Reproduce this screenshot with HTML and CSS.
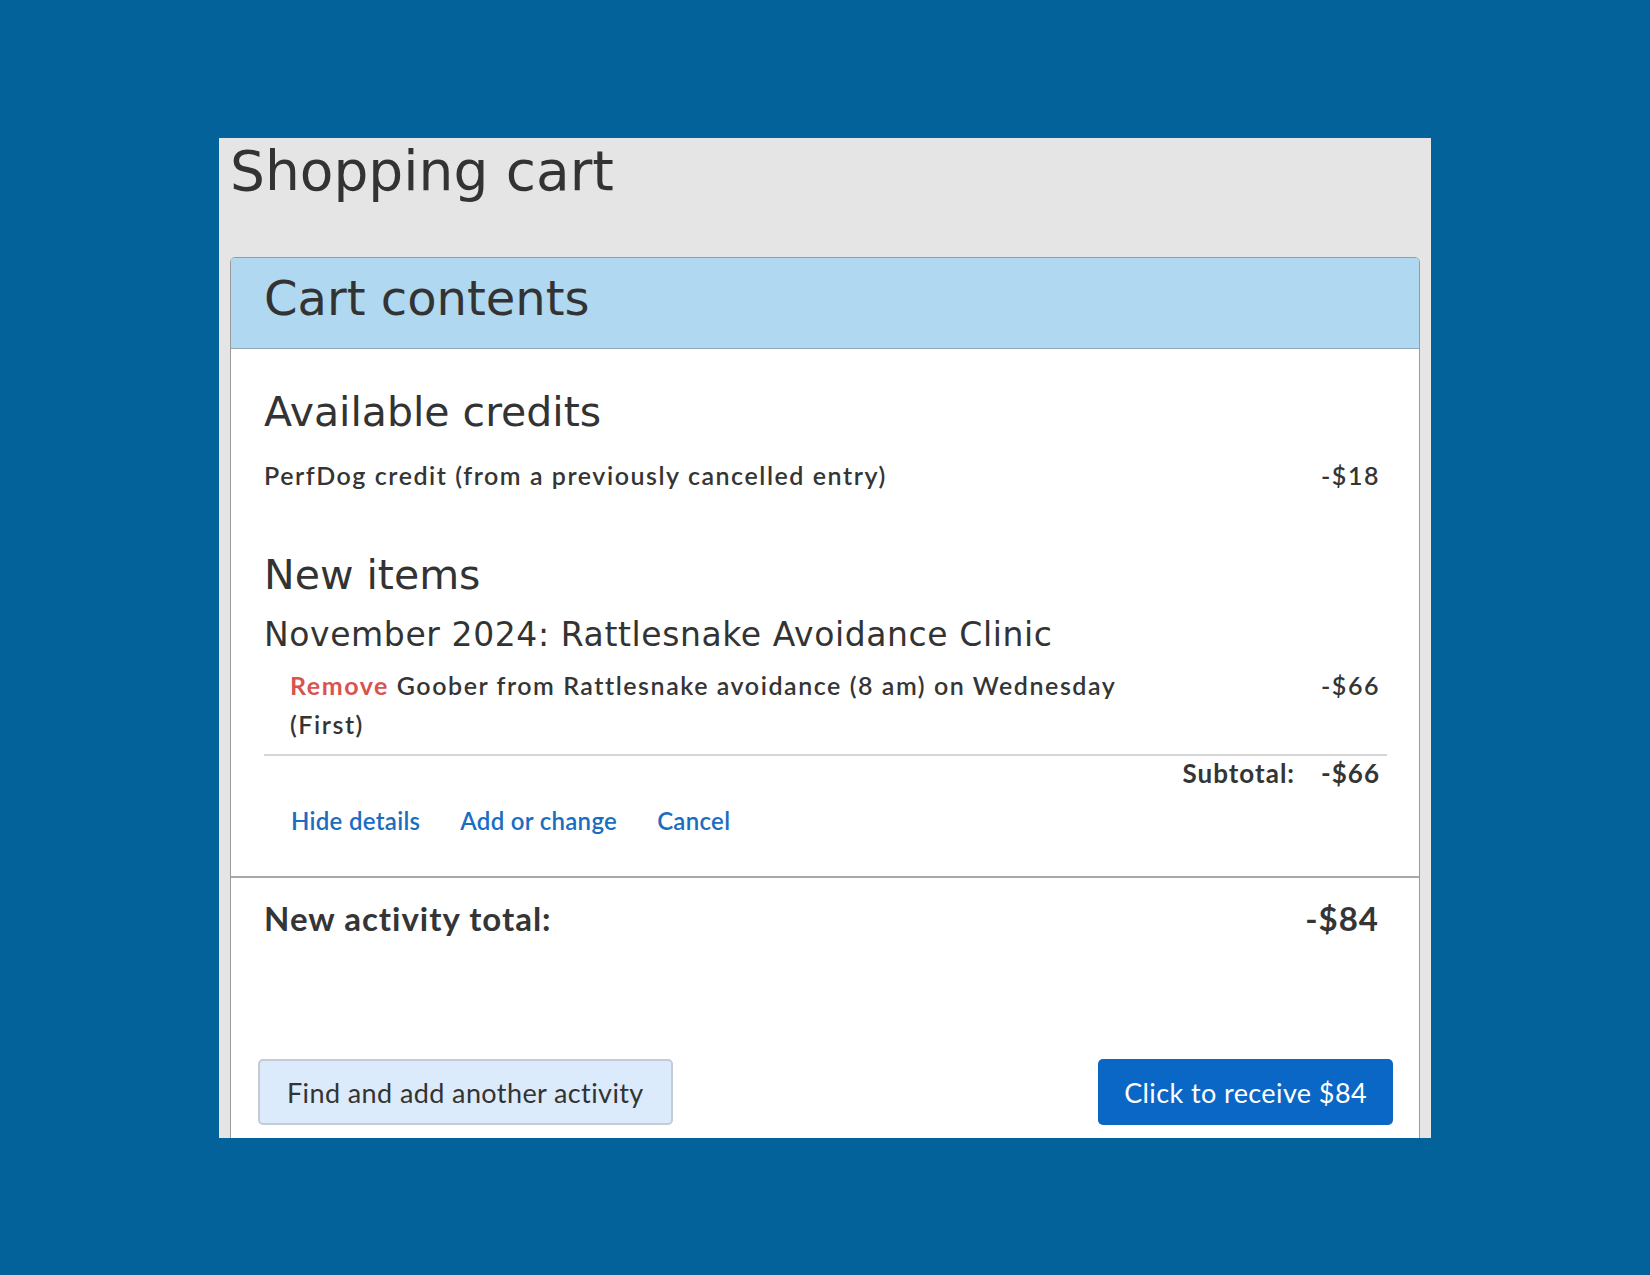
FILE: index.html
```html
<!DOCTYPE html>
<html lang="en">
<head>
    <meta charset="UTF-8">
    <meta name="viewport" content="width=device-width, initial-scale=1.0">
    <title>Shopping cart</title>
    <link rel="stylesheet" href="styles.css">
</head>
<body>
    <div class="page">
        <h1 class="page-title">Shopping cart</h1>

        <div class="card">
            <div class="card-header">
                <h2>Cart contents</h2>
            </div>

            <div class="card-body">
                <!-- Credits -->
                <h3 class="section-title">Available credits</h3>
                <div class="line">
                    <span>PerfDog credit (from a previously cancelled entry)</span>
                    <span class="amount">-$18</span>
                </div>

                <!-- New items -->
                <h3 class="section-title new-items">New items</h3>
                <h4 class="event-title">November 2024: Rattlesnake Avoidance Clinic</h4>

                <div class="item">
                    <span class="item-desc"><a href="#" class="remove">Remove</a> Goober from Rattlesnake avoidance (8 am) on Wednesday (First)</span>
                    <span class="amount">-$66</span>
                </div>

                <div class="subtotal">
                    <span>Subtotal:</span>
                    <span>-$66</span>
                </div>

                <div class="item-links">
                    <a href="#">Hide details</a>
                    <a href="#">Add or change</a>
                    <a href="#">Cancel</a>
                </div>
            </div>

            <div class="card-total">
                <span>New activity total:</span>
                <span>-$84</span>
            </div>

            <div class="card-actions">
                <button class="btn btn-light">Find and add another activity</button>
                <button class="btn btn-primary">Click to receive $84</button>
            </div>
        </div>
    </div>
</body>
</html>
```

FILE: styles.css
```css
body {
    margin: 0;
    background: #03629a;
    font-family: Lato, "Noto Sans", sans-serif;
    color: #353535;
}

.page {
    margin: 138px 0 0 219px;
    width: 1212px;
    height: 1000px;
    overflow: hidden;
    background: #e5e5e5;
}

/* headings use the wide face */
.page-title,
.card-header h2,
.section-title,
.event-title {
    font-family: "DejaVu Sans", sans-serif;
    font-weight: 400;
    color: #333;
}

.page-title {
    margin: 0 0 53px;
    padding-left: 11px;
    font-size: 55px;
    line-height: 66px;
}

.card {
    margin: 0 11px;
    background: white;
    border: 1px solid #9a9a9a;
    border-radius: 5px;
    height: 1200px;
}

.card-header {
    background: #b0d8f0;
    border-bottom: 1px solid #8fa9bb;
    border-radius: 4px 4px 0 0;
    height: 91px;
    padding: 12px 0 0 33px;
    box-sizing: border-box;
}

.card-header h2 {
    margin: 0;
    font-size: 48px;
    line-height: 56px;
}

.card-body {
    padding: 39px 32px 40px 33px;
}

.section-title {
    margin: 0 0 20px;
    font-size: 41px;
    line-height: 48px;
}

.section-title.new-items {
    margin: 57px 0 16px;
}

.event-title {
    margin: 0 0 11px;
    font-size: 33px;
    line-height: 40px;
    letter-spacing: 0.6px;
}

.line,
.item {
    display: flex;
    justify-content: space-between;
    font-size: 25px;
    font-weight: 600;
    letter-spacing: 1.55px;
    line-height: 38px;
}

.amount {
    padding-right: 7px;
}

.item {
    line-height: 39px;
    padding: 0 0 10px 26px;
    border-bottom: 2px solid #d6d6d6;
}

.item-desc {
    flex: 0 1 860px;
}

.remove {
    color: #d9534f;
    font-weight: 700;
    text-decoration: none;
}

.subtotal {
    display: flex;
    justify-content: flex-end;
    gap: 26px;
    padding-right: 7px;
    font-size: 26px;
    line-height: 34px;
    font-weight: 700;
    letter-spacing: 1px;
}

.item-links {
    display: flex;
    gap: 40px;
    margin-top: 16px;
    padding-left: 27px;
    font-size: 24px;
    line-height: 30px;
    letter-spacing: 0.3px;
}

.item-links a {
    color: #1a6dbf;
    font-weight: 600;
    text-decoration: none;
}

.card-total {
    display: flex;
    justify-content: space-between;
    border-top: 2px solid #a8a8a8;
    padding: 20px 40px 0 33px;
    font-size: 33px;
    line-height: 40px;
    font-weight: 700;
    letter-spacing: 1px;
}

.card-actions {
    display: flex;
    justify-content: space-between;
    margin-top: 121px;
    padding: 0 26px 0 27px;
}

.btn {
    height: 66px;
    padding: 0 27px;
    border-radius: 5px;
    font-family: Lato, "Noto Sans", sans-serif;
    font-size: 27px;
    letter-spacing: 0.4px;
    cursor: pointer;
}

.btn-light {
    background: #dcebfb;
    border: 2px solid #c3ccd6;
    color: #333;
}

.btn-primary {
    background: #0b67c6;
    border: none;
    color: white;
    padding: 0 26px;
}
```
